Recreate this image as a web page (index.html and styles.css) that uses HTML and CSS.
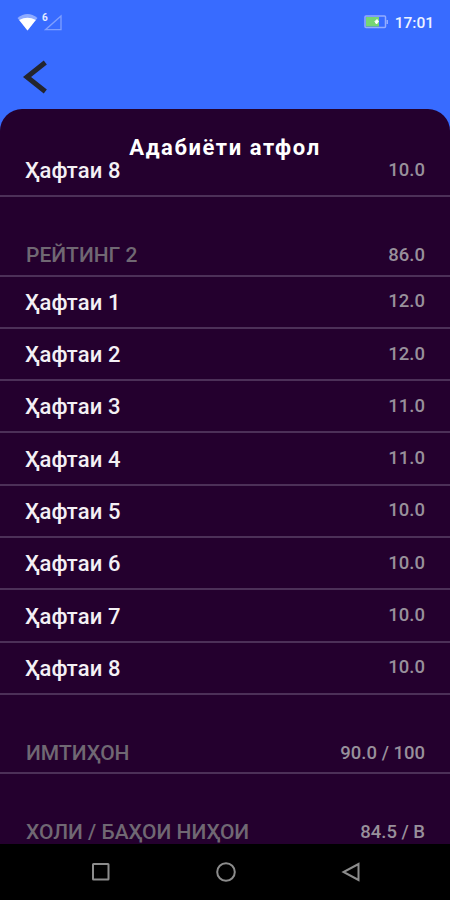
FILE: index.html
```html
<!DOCTYPE html>
<html lang="tg">
<head>
<meta charset="utf-8">
<title>Адабиёти атфол</title>
<link rel="stylesheet" href="styles.css">
</head>
<body>
<div class="screen">
  <header class="status">
    <svg class="signals" width="50" height="24" viewBox="0 0 50 24">
      <path d="M1.500 6Q11.500 -2 21.500 6L11.500 18.500Z" fill="#8fabff"/>
      <path d="M3.200 8Q11.500 3.500 19.800 8L11.500 18.500Z" fill="#fff"/>
      <path d="M29.500 17.700H45V4Z" fill="none" stroke="#7f9fff" stroke-width="1.300"/>
      <text x="26" y="9" class="net">6</text>
    </svg>
    <div class="right">
      <svg width="26" height="14" viewBox="0 0 26 14">
        <rect x="3" y="1" width="20.500" height="11.500" rx="1" fill="none" stroke="#94adff" stroke-width="1.500"/>
        <rect x="4" y="2" width="13" height="9.500" fill="#76d672"/>
        <path d="M24.500 5h1.500v4H24.500z" fill="#94adff"/>
        <path d="M13 6.500L15 4.500l1.500 2L14.500 9z" fill="#fff" stroke="#fff"/>
      </svg>
      <span class="clock">17:01</span>
    </div>
  </header>
  <nav class="toolbar">
    <svg width="24" height="34" viewBox="0 0 24 34"><path d="M22.300 2.500L4 17L22.300 31.500" fill="none" stroke="#24252e" stroke-width="5"/></svg>
  </nav>
  <main class="sheet">
    <h1 class="title">Адабиёти атфол</h1>
    <div class="list">
      <div class="row"><span>Ҳафтаи 8</span><b>10.0</b></div>
      <div class="row head"><span>РЕЙТИНГ 2</span><b>86.0</b></div>
      <div class="row"><span>Ҳафтаи 1</span><b>12.0</b></div>
      <div class="row"><span>Ҳафтаи 2</span><b>12.0</b></div>
      <div class="row"><span>Ҳафтаи 3</span><b>11.0</b></div>
      <div class="row"><span>Ҳафтаи 4</span><b>11.0</b></div>
      <div class="row"><span>Ҳафтаи 5</span><b>10.0</b></div>
      <div class="row"><span>Ҳафтаи 6</span><b>10.0</b></div>
      <div class="row"><span>Ҳафтаи 7</span><b>10.0</b></div>
      <div class="row"><span>Ҳафтаи 8</span><b>10.0</b></div>
      <div class="row head"><span>ИМТИҲОН</span><b>90.0 / 100</b></div>
      <div class="row head"><span>ХОЛИ / БАҲОИ НИҲОИ</span><b>84.5 / B</b></div>
    </div>
  </main>
  <footer class="keys">
    <svg width="20" height="20" viewBox="0 0 20 20"><rect x="2" y="2" width="15.500" height="15.500" rx=".5"/></svg>
    <svg width="20" height="20" viewBox="0 0 20 20"><circle cx="10" cy="10" r="8.800"/></svg>
    <svg width="20" height="20" viewBox="0 0 20 20"><path d="M17.500 2V18L2.500 10Z"/></svg>
  </footer>
</div>
</body>
</html>
```
FILE: styles.css
```css
* { box-sizing: border-box; }
body { margin: 0; font-family: Roboto, sans-serif; background: #386bff; }
.screen { height: 900px; width: 450px; display: flex; flex-direction: column; overflow: hidden; }
.status { height: 45px; padding: 12px 16px 0 16px; display: flex; justify-content: space-between; }
.right { display: flex; gap: 7px; padding-top: 3px; }
.clock { color: #edf2ff; font-size: 15.5px; font-weight: 500; line-height: 16px; letter-spacing: 0; }
.net { font: 700 10px Roboto, sans-serif; fill: #e4ebff; }
.toolbar { height: 64px; padding: 15px 0 0 23px; }
.sheet { height: 735px; background: #24002e; border-radius: 22px 22px 0 0; overflow: hidden; }
.title { margin: 0; height: 36px; padding-top: 27px; text-align: center; color: #fff; font-size: 22px; font-weight: 700; line-height: 24px; letter-spacing: 1.6px; }
.row { height: 52.3px; padding: 2px 25px 0; border-bottom: 2px solid #4c3058; display: flex; justify-content: space-between; align-items: center; color: #f4f0f5; font-size: 22px; font-weight: 500; letter-spacing: .1px; }
.row span { line-height: 24px; }
.row b { line-height: 24px; padding-bottom: 3px; font-size: 18.5px; font-weight: 500; letter-spacing: 0; color: #98909b; }
.head { height: 79.3px; padding: 39px 25px 0 26px; color: #706873; font-size: 21px; letter-spacing: 0; }
.head b { padding-bottom: 0; }
.keys { height: 56px; background: #000; display: flex; justify-content: space-between; align-items: center; padding: 0 89px 0 91px; }
.keys svg { fill: none; stroke: #8c8c8c; stroke-width: 2; }
```
